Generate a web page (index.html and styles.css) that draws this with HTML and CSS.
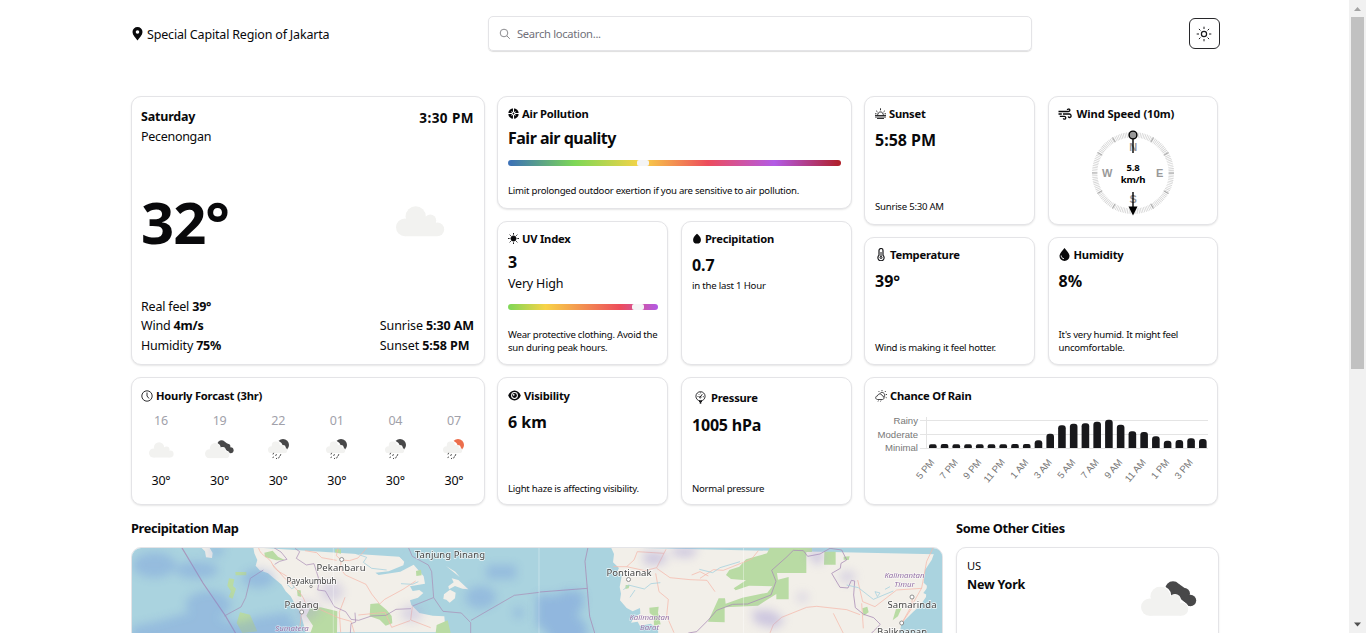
FILE: index.html
```html
<!DOCTYPE html>
<html lang="en">
<head>
<meta charset="utf-8">
<title>Weather</title>
<link rel="stylesheet" href="styles.css">
</head>
<body>
<svg class="defs" aria-hidden="true">
  <defs>
    <symbol id="cloud" viewBox="0 0 48 30"><g fill="#f2f2f0"><circle cx="8.700" cy="20.700" r="8.700"/><circle cx="19.300" cy="10" r="9.900"/><circle cx="33.600" cy="14" r="5.800"/><circle cx="40.500" cy="22.700" r="6.700"/><path d="M8.700 29.400V14L20 10l13 1 7 7v11.400z"/></g></symbol>
    <symbol id="clouds" viewBox="0 0 56 36">
      <g fill="#484849"><circle cx="32" cy="8.300" r="8"/><circle cx="43.600" cy="12.500" r="5.400"/><circle cx="49.400" cy="19.500" r="5.800"/><path d="M32 8l6-5 7 5 5 12-2 5-14-12z"/></g>
      <g fill="#fff"><circle cx="20.500" cy="15" r="9.900"/><circle cx="34" cy="19" r="6"/><circle cx="40.800" cy="27.600" r="7"/></g>
      <use href="#cloud" x="0" y="5.400" width="48" height="30"/>
    </symbol>
    <symbol id="rain" viewBox="0 0 21 21">
      <circle cx="15" cy="6" r="6"/><path fill="#fff" d="M4 13V5l6-3.500 3.500 2.500 1 2 2.500.5 2 5-2 2z"/>
      <use href="#cloud" x="0" y="2.300" width="19.500" height="12.200"/>
      <g stroke="#4b4b4b" stroke-width="1" stroke-linecap="round"><path d="M5.500 14.200l-.4.900M8.300 15.500l-.5 1.100M12.700 15.500l-.5 1.100M5.300 18l-.3.700M8.700 19.200l-.3.500M11.300 17.800l-.6 1.200"/></g>
    </symbol>
    <filter id="soft" x="-30%" y="-30%" width="160%" height="160%"><feGaussianBlur stdDeviation="14"/></filter>
  </defs>
</svg>

<header class="top">
  <div class="place">
    <svg width="11" height="14" viewBox="0 0 11 14"><path fill="#09090b" fill-rule="evenodd" d="M5.500 0A5 5 0 0 0 .5 5c0 3 2.800 5.500 5 8.500 2.200-3 5-5.500 5-8.500a5 5 0 0 0-5-5zm0 3.200a1.800 1.800 0 1 1 0 3.600 1.800 1.800 0 0 1 0-3.600z"/></svg>
    <span>Special Capital Region of Jakarta</span>
  </div>
  <div class="search">
    <svg width="12" height="12" viewBox="0 0 12 12" fill="none" stroke="#8c8c8f" stroke-width="1"><circle cx="5" cy="5" r="3.800"/><path d="M7.800 7.800l3 3"/></svg>
    <span>Search location...</span>
  </div>
  <div class="theme">
    <svg width="16" height="16" viewBox="0 0 16 16" fill="none" stroke="#18181b" stroke-width="1"><circle cx="8" cy="8" r="2.600" stroke-width="1.200"/><path d="M8 .7v2.300M8 13v2.300M.7 8H3M13 8h2.300M2.900 2.900l1.500 1.500M11.600 11.600l1.500 1.500M13.100 2.900l-1.500 1.500M4.400 11.600l-1.500 1.500"/></svg>
  </div>
</header>

<main>
<section class="board">
  <div class="col">
    <article class="card now">
      <div class="split"><div><b class="day">Saturday</b><p class="base">Pecenongan</p></div><b class="time">3:30 PM</b></div>
      <div class="split mid"><div class="huge">32°</div><svg class="nowicon" width="49" height="31"><use href="#cloud"/></svg></div>
      <div class="split facts">
        <div><p>Real feel <b>39°</b></p><p>Wind <b>4m/s</b></p><p>Humidity <b>75%</b></p></div>
        <div class="sun"><p>Sunrise <b>5:30 AM</b></p><p>Sunset <b>5:58 PM</b></p></div>
      </div>
    </article>
    <article class="card short hourly">
      <h3><svg width="12" height="12" viewBox="0 0 12 12" fill="none" stroke="#18181b" stroke-width=".9"><circle cx="6" cy="6" r="5.200"/><path d="M6 2.500V6l2 2.500"/></svg>Hourly Forcast (3hr)</h3>
      <div class="hours">
        <div><i>16</i><svg width="25" height="16"><use href="#cloud"/></svg><span>30°</span></div>
        <div><i>19</i><svg width="29" height="19"><use href="#clouds"/></svg><span>30°</span></div>
        <div><i>22</i><svg class="night" width="21" height="21"><use href="#rain"/></svg><span>30°</span></div>
        <div><i>01</i><svg class="night" width="21" height="21"><use href="#rain"/></svg><span>30°</span></div>
        <div><i>04</i><svg class="night" width="21" height="21"><use href="#rain"/></svg><span>30°</span></div>
        <div><i>07</i><svg class="daylight" width="21" height="21"><use href="#rain"/></svg><span>30°</span></div>
      </div>
    </article>
  </div>

  <div class="col">
    <article class="card air">
      <h3><svg width="11" height="11" viewBox="0 0 12 12"><circle cx="6" cy="6" r="4" fill="none" stroke="#09090b" stroke-width="3.400"/><path stroke="#fff" stroke-width="1.200" d="M6 0v12M0 6h12"/><path stroke="#fff" stroke-width=".6" d="M3.500 3.500l5 5M8.500 3.500l-5 5"/><circle cx="6" cy="6" r="1" fill="#09090b"/></svg>Air Pollution</h3>
      <b class="value tight">Fair air quality</b>
      <div class="bar aqi"><span></span></div>
      <p class="note">Limit prolonged outdoor exertion if you are sensitive to air pollution.</p>
    </article>
    <div class="pair">
      <article class="card uv">
        <h3><svg width="11" height="11" viewBox="0 0 12 12" stroke="#09090b"><circle cx="6" cy="6" r="2.800" fill="#09090b"/><path d="M6 0v1.800M6 10.200V12M0 6h1.800M10.200 6H12M1.800 1.800L3 3M9 9l1.200 1.200M10.200 1.800L9 3M3 9l-1.200 1.200"/></svg>UV Index</h3>
        <b class="value">3</b>
        <p class="level">Very High</p>
        <div class="bar uvb"><span></span></div>
        <p class="note">Wear protective clothing. Avoid the<br>sun during peak hours.</p>
      </article>
      <article class="card drop">
        <h3><svg width="10" height="11" viewBox="0 0 10 11"><path fill="#09090b" d="M5 .8c2 1.600 3.900 3.600 3.900 5.900a3.900 3.900 0 0 1-7.800 0C1.100 4.400 3 2.400 5 .8z"/></svg>Precipitation</h3>
        <b class="value">0.7</b>
        <p class="sub">in the last 1 Hour</p>
      </article>
    </div>
    <div class="pair short">
      <article class="card">
        <h3><svg width="13" height="11" viewBox="0 0 13 11"><path fill="#09090b" fill-rule="evenodd" d="M6.500.5C3.500.5 1.300 2.700.2 5.500c1.100 2.800 3.300 5 6.300 5s5.200-2.200 6.300-5c-1.100-2.800-3.300-5-6.300-5zm0 1.600a3.400 3.400 0 1 1 0 6.800 3.400 3.400 0 0 1 0-6.800z"/><circle cx="6.500" cy="5.500" r="2.400" fill="#09090b"/><circle cx="5.700" cy="4.800" r=".9" fill="#fff"/></svg>Visibility</h3>
        <b class="value">6 km</b>
        <p class="note">Light haze is affecting visibility.</p>
      </article>
      <article class="card pressure">
        <h3><svg width="16" height="13" viewBox="0 0 16 13" fill="none" stroke="#18181b" stroke-width=".9"><circle cx="8.500" cy="5.300" r="4.600"/><path d="M8.300 6l2-2.800M5.500 5.500h1M10.800 5.700h1M6.500 3l.6.600M8.500 1.500v.8"/><path stroke-width="3" d="M8.500 9.500v1.500"/><path stroke-width="1.600" d="M8.500 10v2.700"/><circle cx="8.200" cy="6.200" r=".8"/></svg>Pressure</h3>
        <b class="value">1005 hPa</b>
        <p class="note">Normal pressure</p>
      </article>
    </div>
  </div>

  <div class="col">
    <div class="pair half upper">
      <article class="card">
        <h3><svg width="11" height="11" viewBox="0 0 11 11" fill="none" stroke="#18181b" stroke-width=".9"><path d="M2.800 7.500a2.800 2.800 0 1 1 5.400 0M0 7.500h11M0 9h11M2 10.500h7M5.500.3v2M1.200 2.800l1.300 1.200M9.800 2.800L8.500 4M0 5.800h1.500M9.500 5.800H11"/></svg>Sunset</h3>
        <b class="value">5:58 PM</b>
        <p class="note">Sunrise 5:30 AM</p>
      </article>
      <article class="card wind">
        <h3><svg width="14" height="12" viewBox="0 0 14 12" fill="none" stroke="#09090b" stroke-width="1.300"><path d="M.5 3.500h9.700c2.300 0 2-2.700.2-2.500-.7 0-1 .5-1 .9M.5 6h3.300M5 6h6.300c2.500 0 2.200 3.800.1 3.500-.8-.1-1-.7-.9-1.200M1.800 8.400h4.500c2.100 0 1.800 2.900.1 2.800-.7 0-1-.5-1-1"/></svg>Wind Speed (10m)</h3>
        <svg class="compass" width="86" height="88" viewBox="-43 -43 86 88">
          <circle r="38.300" fill="none" stroke="#d2d2d2" stroke-width="5.400" stroke-dasharray=".75 .921"/>
          <g stroke="#999" stroke-width=".8"><path id="tick" d="M-41 0h5.400M35.600 0H41"/><use href="#tick" transform="rotate(30)"/><use href="#tick" transform="rotate(60)"/><use href="#tick" transform="rotate(120)"/><use href="#tick" transform="rotate(150)"/></g>
          <g class="points"><text y="-22">N</text><text x="26.500" y="4">E</text><text x="-26" y="4">W</text><text y="30">S</text></g>
          <path stroke="#000" stroke-width="1.400" d="M0-34.500V-20M0 19v16"/><circle cy="-38" r="3.900" fill="#999" stroke="#000" stroke-width="1.400"/><path d="M-4.500 33.500h9L0 42.500z"/>
          <g class="speed"><text y="-2.500">5.8</text><text y="9.500">km/h</text></g>
        </svg>
      </article>
    </div>
    <div class="pair half">
      <article class="card">
        <h3><svg width="12" height="13" viewBox="0 0 12 13" fill="none" stroke="#18181b"><path d="M4 2.500a2 2 0 0 1 4 0v4.800a3.100 3.100 0 1 1-4 0z" stroke-width="1.200"/><circle cx="6" cy="9.500" r="1"/><path d="M6 4v5"/></svg>Temperature</h3>
        <b class="value">39°</b>
        <p class="note">Wind is making it feel hotter.</p>
      </article>
      <article class="card humid">
        <h3><svg width="11" height="13" viewBox="0 0 11 13"><path fill="#09090b" d="M5.500 0c2 2.500 5 5.300 5 8a5 5 0 0 1-10 0c0-2.700 3-5.500 5-8z"/><path d="M2.200 7.500c0 2 1.200 3 2.800 3.200" stroke="#fff" fill="none" stroke-width=".9"/></svg>Humidity</h3>
        <b class="value">8%</b>
        <p class="note">It's very humid. It might feel<br>uncomfortable.</p>
      </article>
    </div>
    <article class="card short">
      <h3><svg width="12" height="12" viewBox="0 0 12 12" fill="none" stroke="#18181b" stroke-width=".8"><path d="M2.500 9.500C0 9.300.2 6 2.400 6 3 3.200 6.800 3.300 7.400 6c2.400.1 2.200 3.400 0 3.500zM3.500 10.500l-.5 1M6 10.500l-.5 1M5 3.500C6 1.500 9.800 2.500 9.700 5.200c0 1-.5 1.800-1.200 2.200M7 0v1.200M10.800 1l-1 1M12 4.500h-1.200M3.500 1l.8.900M11.700 7.800l-1-.5"/></svg>Chance Of Rain</h3>
      <svg class="chart" width="334" height="80" viewBox="875 410 334 80">
        <path stroke="#e4e4e4" fill="none" d="M920 421.500h288M920 435.500h288M920 449.500h288M926.500 418v32"/>
        <g class="ylab"><text x="918" y="424.500">Rainy</text><text x="918" y="438.500">Moderate</text><text x="918" y="452">Minimal</text></g>
        <g class="bars"></g>
        <g class="xlab"></g>
      </svg>
    </article>
  </div>
</section>

<section class="lower">
  <div class="mapcol">
    <h2>Precipitation Map</h2>
    <div class="map">
      <svg width="811" height="140" viewBox="132 548 811 140">
        <path fill="#aad3df" d="M131 547h812v150H131z"/>
        <g transform="translate(125 510) scale(.33333)">
          <path fill="#f2efe9" d="M228 112l12 12 3 18 18 2 2-15-10-17zM385 112l3 18 9 20-5 17 12 14 25 9 17 14 24 20 12 20 15 15 14 25 15 23 16 60h420l-4-48-35-2-40-8-24-24-4-14 24-8 16-14-12-9-20 3-8-14 45-8-4-22-30-35-40 21-65 10-10-7 40-4 44-18 3-12-15-14zM980 205l20 5 30 28-18-2-22-8-18 10-2-9 16-12zM957 253l18-14 17 9-2 17-16 13-10-9-9-2zM963 168l28 17 13 16M958 188l23 10"/>
          <g fill="#b9dba4"><path d="M312 205l16 3-4 20 9 8-10 30-12-5 7-17-11-17zM331 186h33v10h-32zM345 307l30 7 22 50-45 5-17-30zM555 295l32-3 50 12-1 65h-80l8-22-20-30zM736 282l25-2 24 20 15 18 2 22-20 7-18-18-30-10zM935 345l33-14 9 38h-45zM873 183l15-4 2 17-16 2zM418 128l25-6 16 18 20 10-25 1-34-10zM516 240l11 1 2 20-11-3zM630 118h18v13l-18-4z"/></g>
          <g fill="none" stroke="#f6b8aa" stroke-width="2.200"><path d="M400 112c8 30 32 25 43 52s48 28 53 48 37 35 45 67l50 22 51 23 36 10 10 34M443 164l38 43 18 15M640 112l-6 25 15 13 24 2 26-8 26-30M648 153l-1 24 14 18 62 28 17 29 24 30 15-14 55-30 38-25M540 122l35 6 15 15 45 8M530 305l-6 50M660 262l-17 45 4 60M700 315l80-8 20 45 55-20M862 290l-5 40 60 23"/></g>
          <g fill="none" stroke="#aa8db5" stroke-width="2.500" opacity=".85"><path d="M170 112l64 107 67 98 35 60" stroke-width="3.500"/><path d="M415 180l-39 25-14 58-14 28-50 27M850 112l12 27 48 26 10 20 6 78 28 41 55 5 28 29v40M925 263l-62 25M1038 331l130-75 75-9M445 112l23 14 18 22-22 6-15 9M510 115l14 10-10 20 30 20 23-4 16 51-5 28 23 3 27 47 34 15 16 23 23 3 38-13 44-2 30-18 45-2M690 308l2 28-14 5-2 28"/></g>
          <g fill="none" stroke="#aad3df" stroke-width="2.500"><path d="M690 130l35 12-10 15 25 18 45 5M485 222l15 14 8-4M500 218l8 15M830 112l7 15-12 12 13 16 12-3M880 215l-18 8-34-2"/></g>
          <g fill="#6d8fdc" opacity=".33" filter="url(#soft)"><ellipse cx="88" cy="165" rx="65" ry="38"/><ellipse cx="215" cy="180" rx="65" ry="26"/><ellipse cx="400" cy="205" rx="48" ry="28"/><ellipse cx="250" cy="285" rx="68" ry="42"/><path d="M20 350l90-20 70-20 80 10 80 20 60-20 90-15 30 64 0 60H20zM1085 165h88v42h-88z"/><ellipse cx="1067" cy="262" rx="46" ry="34"/><ellipse cx="1180" cy="308" rx="14" ry="18"/><path d="M250 112h50l-10 25h-38z"/></g>
          <g fill="#a89fd5" opacity=".32" filter="url(#soft)"><ellipse cx="620" cy="245" rx="35" ry="30"/><path d="M515 270l45 5 30 20-20 30-45 10z"/><ellipse cx="860" cy="310" rx="33" ry="25"/></g>
          <path stroke="#fff" opacity=".5" stroke-width="2" d="M625 112v257M1242 112v257"/>
        </g>
        <g transform="translate(540 510) scale(.33333)">
          <path fill="#f2efe9" d="M213 112l9 20-3 25 18 17-6 12 15 8-7 37 4 20-3 20 20 23 18 10 22-10 1 17-18 10-10 17 20-3 7 13 32-7 22 15 5 120h720v-90l35-40 30-8 24-28-17-8 23-19-16-22 5-62 16-25 20-27-14-14z"/>
          <path fill="#aad3df" d="M1085 340l35-35 20-18 22-32-12-6 14-19-13-12 4-38 20-30 14-38h60v300h-180z"/>
          <g fill="#b9dba4"><path d="M690 112h126v14h-17v63h-88l3 20 32-8v67h-37v-16l-55 35-100 5v45l-50-2 32-70h19l2 16 50-18 75-15 15-19-70-2-40 14-6-6 37-24-45-4-15-12 10-15 30-10 20-22 63-18zM853 125h34v39h-35zM328 293l28-3-2 18 8 35-20 4-1-28-12-10zM967 295l15-5 4 17-15 10zM1068 297l17-4-11 26-16 12zM257 225l12 0-3 10-10 2zM911 140l18-1-3 11-15-1z"/></g>
          <g fill="none" stroke="#f6b8aa" stroke-width="2.200"><path d="M220 170h40l22-20 10-25 80 5M260 170l55 12 35-9 28-55M350 175l40 28 60 6 51 2 24 34M347 190l10 55 28 23-5 50 22 50M480 205l40-26 30 2 60-24 25-10 20-25M1180 112l-20 42-15 80-60 106M1145 235l-75 5-65 50-37-15-15-65M690 369l10-25 25-22 75-30 30-3 90 10 40 15M880 310l30 60M1118 260l-5 38-28 42M455 195l25-10 25 13M965 280l5 75"/></g>
          <g fill="none" stroke="#aa8db5" stroke-width="2.800" opacity=".85"><path d="M144 112l-9 42 14 165 15 50M0 246l142-11M445 369l25-4 35-35 25-29 48-18 45-1 70-27 15-41-13-33 45-40 20-20 30 1 13 17 37-7 30-17 35 5 15 30-17 10-2 15-26 15 25 42 24 2 10-23 10 2-3 42 5 38 25 20 30 10 20 20-20 20-25 25"/></g>
          <g fill="none" stroke="#aad3df" stroke-width="2.500"><path d="M250 240l15-15 48 12 20-16 28-3M270 262l15-22M600 155l-60 18-22 15-40-10M920 225l35 8 45 35 60-25M1005 245l15 4-8 11zM1035 238l15-8"/></g>
          <g fill="#6d8fdc" opacity=".4" filter="url(#soft)"><path d="M-10 255l60 0 30-15 50 5v45l-20 25 30 30v80H40l-20-60-30-20z"/></g>
          <g fill="#a89fd5" opacity=".5" filter="url(#soft)"><path d="M400 112h75l-20 30-60-5zM310 125l70 5-5 30-60 5zM635 300l60 0 40 30-30 25-60-15zM800 125l55 0-15 40-20-10z"/><ellipse cx="922" cy="200" rx="25" ry="18" opacity=".7"/><ellipse cx="787" cy="262" rx="18" ry="15" opacity=".6"/></g>
          <path stroke="#fff" opacity=".65" stroke-width="2" d="M611 112v257"/>
        </g>
        <g fill="#fff" stroke="#777" stroke-width=".8"><circle cx="341.700" cy="559.500" r="2"/><circle cx="301.700" cy="612" r="2"/><circle cx="311" cy="586.500" r="1.200"/><circle cx="628.500" cy="579.500" r="2"/><circle cx="912" cy="597" r="2"/><circle cx="901.700" cy="623" r="2"/></g>
        <g class="town"><text x="341" y="571" textLength="49">Pekanbaru</text><text x="311.500" y="583.500" class="sm" textLength="50">Payakumbuh</text><text x="301.500" y="608" textLength="34">Padang</text><text x="450" y="558" textLength="70">Tanjung Pinang</text><text x="629" y="575.500" textLength="45">Pontianak</text><text x="912" y="608" textLength="49">Samarinda</text><text x="902" y="634.500" textLength="50">Balikpapan</text></g>
        <g class="region"><text x="292" y="631">Sumatera</text><text x="649.500" y="620">Kalimantan</text><text x="649.500" y="630">Barat</text><text x="904.500" y="578">Kalimantan</text><text x="904.500" y="587">Timur</text></g>
      </svg>
    </div>
  </div>
  <div class="cities">
    <h2>Some Other Cities</h2>
    <article class="card city">
      <div><p>US</p><b>New York</b></div>
      <svg width="56" height="36"><use href="#clouds"/></svg>
    </article>
  </div>
</section>
</main>

<div class="scrollbar">
  <svg width="17" height="17"><path fill="#a3a3a3" d="M5 11l3.500-4 3.500 4z"/></svg>
  <div class="thumb"></div>
  <svg width="17" height="17"><path fill="#505050" d="M5 6.500l3.500 4 3.500-4z"/></svg>
</div>
<script src="chart.js"></script>
</body>
</html>
```
FILE: styles.css
```css
* { box-sizing: border-box; margin: 0; }
html, body { height: 100%; overflow: hidden; }
body { width: 1366px; background: #fff; color: #09090b; font-family: "Noto Sans", "Open Sans", sans-serif; font-size: 12.5px; letter-spacing: -.2px; }
svg { display: block; flex: none; }
.defs { width: 0; height: 0; position: absolute; }
.top { width: 1089px; height: 67px; margin-left: 131px; display: flex; align-items: center; justify-content: space-between; }
.place { display: flex; align-items: center; gap: 4px; width: 357px; padding-left: 1px; line-height: 18px; }
.place span { padding-top: 2px; letter-spacing: -.18px; }
.search { width: 544px; height: 35px; border: 1px solid #e4e4e7; border-radius: 5px; box-shadow: 0 1px 1px #0002; display: flex; align-items: center; gap: 6px; padding-left: 10px; color: #71717a; font-size: 11.2px; letter-spacing: -.3px; }
.theme { width: 31px; height: 31px; border: 1px solid #27272a; border-radius: 6px; display: flex; align-items: center; padding-left: 6px; margin-left: 157px; }
main { width: 1088px; margin: 29px 0 0 131px; }
.board { display: grid; grid-template-columns: 354px 355px 354px; gap: 12px; }
.col { display: flex; flex-direction: column; gap: 12px; height: 409px; }
.pair { display: grid; grid-template-columns: 1fr 1fr; gap: 13px; flex: 1; }
.half { flex: none; height: 128.500px; }
.card { background: #fff; border: 1px solid #e4e4e7; border-radius: 10px; box-shadow: 0 1px 2px #0000001a; padding: 8px 10px 10px; display: flex; flex-direction: column; }
.short { height: 128px; flex: none; }
.card.short, .short .card { padding-top: 9px; padding-bottom: 9px; }
.card.hourly, .card.now { padding-left: 9px; }
.card.now { flex: 1; padding-top: 10px; padding-bottom: 9px; }
.upper .card, .card.air { padding-bottom: 11px; }
.card.drop { padding-left: 9.500px; }
.split { display: flex; justify-content: space-between; }
.day { display: block; line-height: 20px; }
.base { line-height: 20px; letter-spacing: -.3px; }
.time { font-size: 13.500px; line-height: 22px; letter-spacing: .45px; }
.mid { margin-top: 40px; align-items: center; height: 70px; }
.huge { font-size: 58px; font-weight: 700; line-height: 70px; letter-spacing: -1px; }
.nowicon { margin: 0 29px 1px 0; }
.facts { margin-top: auto; align-items: flex-end; line-height: 19.500px; }
.sun { letter-spacing: -.1px; }
h3 { display: flex; align-items: center; gap: 3px; font-size: 11.2px; line-height: 17px; height: 17px; letter-spacing: -.22px; }
.value { font-size: 16px; line-height: 22px; margin-top: 7px; letter-spacing: 0; }
.tight { margin-top: 5px; letter-spacing: -.5px; }
.note { margin-top: auto; font-size: 9.600px; line-height: 13px; letter-spacing: -.24px; white-space: nowrap; }
.sub { font-size: 9.600px; line-height: 20px; }
.air { height: 112.500px; }
.bar { position: relative; height: 6px; border-radius: 3px; flex: none; }
.bar span { position: absolute; top: 0; width: 12px; height: 6px; border-radius: 2px; background: #f4f4f5; }
.aqi { margin-top: 11px; background: linear-gradient(90deg, #3a6fb8, #7dd756 20%, #f8d347 40%, #ed4c5c 60%, #b25be6 80%, #b01f27); }
.aqi span { left: 128.500px; }
.uv .value { margin-top: 4px; }
.uvb { margin: 10px -1px 0 0; background: linear-gradient(90deg, #7dd756, #f8d347 25%, #ed4c5c 75%, #b25be6); }
.uvb span { left: 124px; }
.level { line-height: 20px; margin-top: 1px; }
.pressure h3 { margin-top: 2px; }
.pressure .value { margin-top: 8px; letter-spacing: -.2px; }
.wind h3 { gap: 5px; letter-spacing: -.1px; margin-left: -1px; }
.humid h3 { gap: 4px; }
.hours { display: flex; justify-content: space-between; padding: 0 1px; margin-top: 6px; }
.hours div { width: 38px; display: grid; grid-template-rows: 20px 39px 22px; place-items: center; }
.hours i { font-style: normal; color: #a1a1aa; }
.night { fill: #484849; }
.daylight { fill: #ec6e4c; }
.compass { margin: 8px auto -10px 31px; }
.points { font: bold 11px "Liberation Sans", sans-serif; fill: #999; text-anchor: middle; }
.speed { font-weight: 700; font-size: 9.600px; text-anchor: middle; }
.chart { margin-top: 5px; }
.ylab, .xlab { font: 9.600px "Liberation Sans", sans-serif; letter-spacing: 0; fill: #777; text-anchor: end; }
.lower { display: flex; justify-content: space-between; margin-top: 13px; }
h2 { font-size: 12.800px; line-height: 20px; margin-bottom: 9px; letter-spacing: -.35px; }
.mapcol { width: 812px; }
.map { height: 142px; border: 1px solid #e4e4e7; border-radius: 10px; overflow: hidden; }
.town { font-size: 9.500px; letter-spacing: 0; text-anchor: middle; fill: #444; stroke: #fffc; stroke-width: 1.500px; paint-order: stroke; }
.sm { font-size: 8.500px; }
.region { font-size: 7.800px; font-style: italic; text-anchor: middle; fill: #9370a5; stroke: #fffa; stroke-width: 1px; paint-order: stroke; letter-spacing: 0; }
.cities { width: 263px; }
.card.city { flex-direction: row; justify-content: space-between; height: 140px; padding-top: 9px; }
.city p, .city b { line-height: 19px; font-size: 12.500px; display: block; }
.city p { font-size: 11.200px; line-height: 18px; }
.city svg { margin: 24px 11px 0 0; }
.scrollbar { position: fixed; top: 0; right: 0; width: 17px; height: 100%; background: #f1f1f1; display: flex; flex-direction: column; }
.thumb { width: 13px; height: 352px; margin: 0 2px auto; background: #c1c1c1; }
```
FILE: chart.js
```js
const heights = [3.7, 4, 3.7, 3.7, 3.7, 3.7, 3.7, 4, 4, 7.7, 14.3, 22.7, 24.3, 24.7, 26.3, 28.3, 23.3, 16.7, 16, 11.7, 7.3, 8, 9.7, 9];
const hours = ["5 PM", "7 PM", "9 PM", "11 PM", "1 AM", "3 AM", "5 AM", "7 AM", "9 AM", "11 AM", "1 PM", "3 PM"];
document.querySelector(".bars").innerHTML = heights.map((h, i) => {
  const x = 929 + i * 11.74, r = Math.min(3, h / 2);
  return `<path fill="#18181b" d="M${x} 449V${449 - h + r}q0-${r} ${r}-${r}h${7.6 - 2 * r}q${r} 0 ${r} ${r}V449z"/>`;
}).join("");
document.querySelector(".xlab").innerHTML = hours.map((t, i) =>
  `<text transform="translate(${935 + i * 23.48} 463.5) rotate(-50)">${t}</text>`).join("");
```
